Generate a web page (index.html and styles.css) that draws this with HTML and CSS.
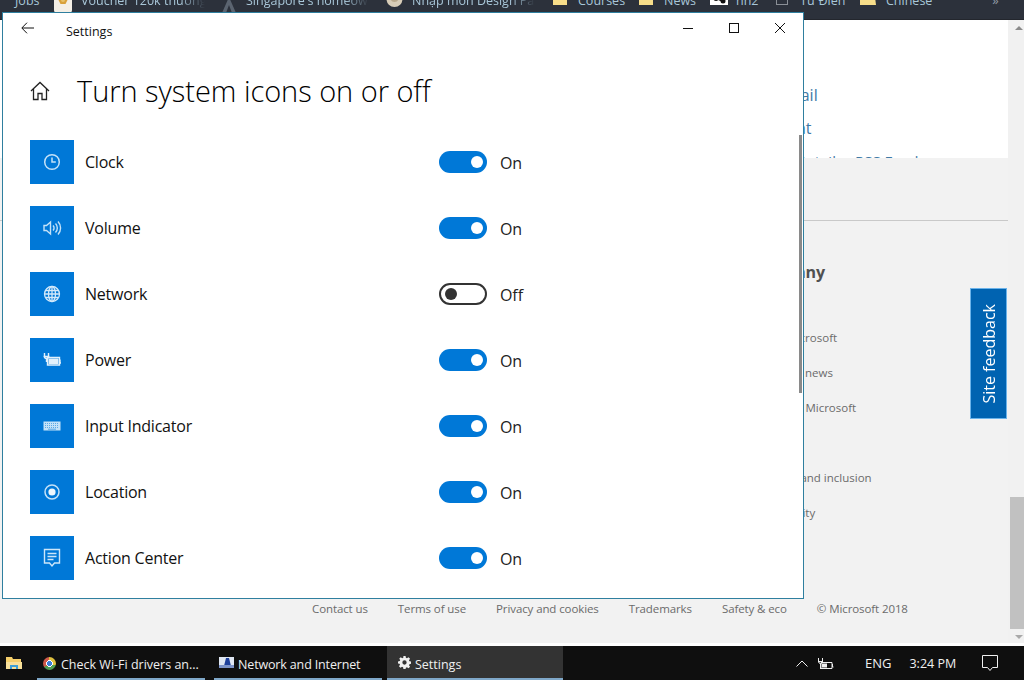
FILE: index.html
```html
<!DOCTYPE html>
<html lang="en">
<head>
<meta charset="utf-8">
<title>Turn system icons on or off</title>
<link rel="stylesheet" href="styles.css">
</head>
<body>
<div class="desktop">
  <div class="browser">
    <div class="bookmarks">
      <div class="bm-row">
        <span class="bm-text bm-jobs">Jobs</span>
        <svg class="bm-icon bm-voucher" width="18" height="16" viewBox="0 0 18 16"><rect width="18" height="16" rx="3" fill="#f4efe6"/><path d="M4 2h10l-2.500 5h-5z" fill="#d9a13a"/><circle cx="9" cy="3" r="2" fill="#e8c26a"/></svg>
        <span class="bm-text bm-fade bm-w-voucher">Voucher 120k thưởng</span>
        <svg class="bm-icon bm-a" width="14" height="16" viewBox="0 0 14 16"><path d="M7 0L14 16H10L7 8L4 16H0z" fill="#5b6470"/></svg>
        <span class="bm-text bm-fade bm-w-sing">Singapore's homeowner</span>
        <svg class="bm-icon bm-round" width="17" height="16" viewBox="0 0 17 16"><circle cx="8.500" cy="2" r="8" fill="#d8cdb8"/><circle cx="8.500" cy="1" r="4" fill="#b9a98c"/></svg>
        <span class="bm-text bm-fade bm-w-nhap">Nhập môn Design Pattern</span>
        <svg class="bm-icon bm-folder1" width="14" height="16" viewBox="0 0 14 16"><path d="M0 0h14v8H0z" fill="#f7dd8a"/></svg>
        <span class="bm-text bm-courses">Courses</span>
        <svg class="bm-icon bm-folder2" width="14" height="16" viewBox="0 0 14 16"><path d="M0 0h14v8H0z" fill="#f7dd8a"/></svg>
        <span class="bm-text bm-news">News</span>
        <svg class="bm-icon bm-hh" width="18" height="16" viewBox="0 0 18 16"><rect width="18" height="8" fill="#fff"/><circle cx="6" cy="1.500" r="2.500" fill="#111"/><circle cx="13" cy="4" r="2.500" fill="#111"/><path d="M6 1l7 3" stroke="#111" stroke-width="2"/></svg>
        <span class="bm-text bm-hh2">hh2</span>
        <svg class="bm-icon bm-doc" width="12" height="16" viewBox="0 0 12 16"><rect x=".5" y="-4" width="11" height="11.500" fill="none" stroke="#8a8f96"/></svg>
        <span class="bm-text bm-tu">Từ Điển</span>
        <svg class="bm-icon bm-folder3" width="16" height="16" viewBox="0 0 16 16"><path d="M0 0h15l1 8H0z" fill="#f7dd8a"/></svg>
        <span class="bm-text">Chinese</span>
        <span class="bm-more">»</span>
      </div>
    </div>
    <div class="content">
      <main class="page">
        <section class="panel">
          <a class="panel-link">Email</a>
          <a class="panel-link panel-link-short">Chat</a>
          <a class="panel-link panel-link-rss">Retailor RSS Feed</a>
        </section>
        <section class="footer">
          <hr class="rule">
          <h2 class="col-title">Company</h2>
          <ul class="col-list">
            <li>About Microsoft</li>
            <li>Company news</li>
            <li>Privacy at Microsoft</li>
            <li>Investors</li>
            <li>Diversity and inclusion</li>
            <li>Accessibility</li>
          </ul>
          <nav class="legal">
            <span>Contact us</span>
            <span>Terms of use</span>
            <span>Privacy and cookies</span>
            <span>Trademarks</span>
            <span>Safety &amp; eco</span>
            <span>© Microsoft 2018</span>
          </nav>
        </section>
      </main>
      <div class="page-scroll">
        <span class="arrow-up"></span>
        <span class="thumb"></span>
        <span class="arrow-down"></span>
      </div>
    </div>
  </div>

  <div class="taskbar">
    <div class="task-start">
      <svg width="16" height="14" viewBox="0 0 16 14"><path d="M0 1h6l1 2h8v10H0z" fill="#f5cf6b"/><rect x="0" y="6" width="16" height="7" fill="#f8e09a"/><path d="M4 13V9h8v4h-2v-2H6v2z" fill="#3d9fd6"/></svg>
    </div>
    <div class="task task-chrome">
      <span class="chrome-logo"></span>
      <span class="task-label">Check Wi-Fi drivers an...</span>
    </div>
    <div class="task task-net">
      <svg width="15" height="11" viewBox="0 0 15 11"><rect width="15" height="11" fill="#dfe6f2"/><path d="M5 9L7 1h3l2 8z" fill="#1d3f9a"/><rect y="8" width="15" height="3" fill="#7c93c9"/></svg>
      <span class="task-label">Network and Internet</span>
    </div>
    <div class="task task-settings">
      <svg width="13" height="13" viewBox="0 0 24 24"><path fill="#f0f0f0" fill-rule="evenodd" d="M10 0h4l.6 3.300 2 .8L19.400 2.200l2.800 2.800-1.900 2.800.8 2 3.300.6v4l-3.300.6-.8 2 1.900 2.800-2.800 2.800-2.800-1.900-2 .8L14 24h-4l-.6-3.300-2-.8-2.800 1.900-2.800-2.800 1.900-2.800-.8-2L0 14v-4l3.300-.6.8-2L2.200 5l2.800-2.800 2.800 1.900 2-.8zM12 8a4 4 0 1 0 0 8 4 4 0 0 0 0-8z"/></svg>
      <span class="task-label">Settings</span>
    </div>
    <div class="tray">
      <svg class="tray-chevron" width="12" height="7" viewBox="0 0 12 7"><path d="M.5 6.500L6 1l5.500 5.500" fill="none" stroke="#eee"/></svg>
      <svg class="tray-battery" width="17" height="13" viewBox="0 0 17 13"><path d="M4 5.500h11v6H4zM15.500 7v3h1" fill="none" stroke="#eee"/><rect x="5" y="6.500" width="5" height="4" fill="#eee"/><path d="M1 4.500h5M1.500 1v3.500a2 2 0 0 0 4 0V1M3.500 6.500V12" fill="none" stroke="#eee"/></svg>
      <span class="tray-lang">ENG</span>
      <span class="tray-time">3:24 PM</span>
      <svg class="tray-note" width="16" height="17" viewBox="0 0 16 17"><path d="M.5.500h15v12h-5l-2.500 3-2.500-3h-5z" fill="none" stroke="#f0f0f0"/></svg>
    </div>
  </div>

  <button class="feedback"><span>Site feedback</span></button>

  <div class="window">
    <header class="titlebar">
      <svg class="back" width="13" height="12" viewBox="0 0 13 12"><path d="M13 6H1M6 .7L.8 6 6 11.300" fill="none" stroke="#111"/></svg>
      <span class="app-name">Settings</span>
      <div class="controls">
        <svg width="10" height="10" viewBox="0 0 10 10"><path d="M0 5.500h10" stroke="#111"/></svg>
        <svg width="10" height="10" viewBox="0 0 10 10"><rect x=".5" y=".5" width="9" height="9" fill="none" stroke="#111"/></svg>
        <svg width="10" height="10" viewBox="0 0 10 10"><path d="M0 0l10 10M10 0L0 10" stroke="#111"/></svg>
      </div>
    </header>
    <div class="heading">
      <svg class="home" width="20" height="20" viewBox="0 0 20 20"><path d="M1 10L10 1.500 19 10M3.500 8v10.500h4.500v-6h4v6h4.500V8" fill="none" stroke="#222" stroke-width="1.300"/></svg>
      <h1>Turn system icons on or off</h1>
    </div>
    <div class="rows">
      <div class="row">
        <span class="tile"><svg width="20" height="20" viewBox="0 0 20 20"><g fill="none" stroke="#c4e2f8" stroke-width="1.500"><circle cx="10" cy="10" r="7.300"/><path d="M10 5.500V10h3.800"/></g></svg></span>
        <span class="label">Clock</span>
        <span class="toggle on"><i></i></span><span class="state">On</span>
      </div>
      <div class="row">
        <span class="tile"><svg width="20" height="20" viewBox="0 0 20 20"><g fill="none" stroke="#c4e2f8" stroke-width="1.400"><path d="M2 7.500h2.500L8.500 4v12l-4-3.500H2z"/><path d="M11 7.500a3.500 3.500 0 0 1 0 5M13.500 5.500a6.500 6.500 0 0 1 0 9M16 3.500a9.500 9.500 0 0 1 0 13"/></g></svg></span>
        <span class="label">Volume</span>
        <span class="toggle on"><i></i></span><span class="state">On</span>
      </div>
      <div class="row">
        <span class="tile"><svg width="20" height="20" viewBox="0 0 20 20"><g fill="none" stroke="#d3e9fa" stroke-width="1.300"><circle cx="10" cy="10" r="7.500"/><ellipse cx="10" cy="10" rx="3.500" ry="7.500"/><path d="M10 2.500v15M2.500 10h15M3.500 6.500h13M3.500 13.500h13"/></g></svg></span>
        <span class="label">Network</span>
        <span class="toggle off"><i></i></span><span class="state">Off</span>
      </div>
      <div class="row">
        <span class="tile"><svg width="20" height="20" viewBox="0 0 20 20"><g fill="none" stroke="#e2f1fc" stroke-width="1.400"><path d="M5.500 7.500h12v7.500h-12zM18 9.500v3.500h1"/><path d="M1.500 6.500h6M2.500 3v3.500a2 2 0 0 0 4 0V3M4.500 8.500V12"/></g><rect x="6.500" y="8.500" width="10" height="5.500" fill="#e2f1fc"/></svg></span>
        <span class="label">Power</span>
        <span class="toggle on"><i></i></span><span class="state">On</span>
      </div>
      <div class="row">
        <span class="tile"><svg width="20" height="20" viewBox="0 0 20 20"><rect x="1.500" y="5.500" width="17" height="9" fill="#c4e2f8"/><path d="M3 7.500h14M3 9.500h14M3 11.500h14" stroke="#5ba9e6" stroke-dasharray="1 1"/><path d="M6 13.200h8" stroke="#5ba9e6"/></svg></span>
        <span class="label">Input Indicator</span>
        <span class="toggle on"><i></i></span><span class="state">On</span>
      </div>
      <div class="row">
        <span class="tile"><svg width="20" height="20" viewBox="0 0 20 20"><circle cx="10" cy="10" r="7" fill="none" stroke="#c4e2f8" stroke-width="1.500"/><circle cx="10" cy="10" r="3.600" fill="#eef7fd"/></svg></span>
        <span class="label">Location</span>
        <span class="toggle on"><i></i></span><span class="state">On</span>
      </div>
      <div class="row">
        <span class="tile"><svg width="20" height="20" viewBox="0 0 20 20"><g fill="none" stroke="#cde6f9" stroke-width="1.400"><path d="M2.500 1.500h15v13.500h-5l-2.500 3-2.500-3h-5z"/><path d="M5.500 5.500h9M5.500 8.500h9M5.500 11.500h6"/></g></svg></span>
        <span class="label">Action Center</span>
        <span class="toggle on"><i></i></span><span class="state">On</span>
      </div>
    </div>
    <span class="win-scroll"></span>
  </div>
</div>
</body>
</html>
```
FILE: styles.css
```css
* { box-sizing: border-box; }
html, body { margin: 0; padding: 0; }
body {
  width: 1024px;
  height: 680px;
  overflow: hidden;
  background: #fff;
  font-family: "Open Sans", "Noto Sans", "Liberation Sans", sans-serif;
}
.desktop {
  position: relative;
  width: 1024px;
  height: 680px;
  display: flex;
  flex-direction: column;
  overflow: hidden;
}

/* browser behind */
.browser { height: 646px; display: flex; flex-direction: column; padding-bottom: 3px; }
.bookmarks {
  height: 20px;
  flex: none;
  background: #2c313b;
  border-bottom: 1px solid #23262d;
  overflow: hidden;
}
.bm-row {
  display: flex;
  align-items: center;
  height: 20px;
  margin-top: -10px;
  padding-left: 15px;
  white-space: nowrap;
}
.bm-text { font-size: 12.500px; color: #a8c6d8; flex: none; }
.bm-fade {
  overflow: hidden;
  -webkit-mask-image: linear-gradient(to right, #000 80%, transparent);
  mask-image: linear-gradient(to right, #000 80%, transparent);
}
.bm-icon { flex: none; margin-top: 10px; }
.bm-jobs { width: 39px; }
.bm-voucher { margin-right: 9px; }
.bm-w-voucher { width: 124px; margin-right: 17px; }
.bm-a { margin-right: 10px; }
.bm-w-sing { width: 123px; margin-right: 17px; }
.bm-round { margin-right: 9px; }
.bm-w-nhap { width: 123px; margin-right: 18px; }
.bm-folder1 { margin-right: 11px; }
.bm-courses { width: 46px; margin-right: 15px; }
.bm-folder2 { margin-right: 11px; }
.bm-news { width: 32px; margin-right: 14px; }
.bm-hh { margin-right: 8px; }
.bm-hh2 { width: 23px; margin-right: 17px; }
.bm-doc { margin-right: 12px; }
.bm-tu { width: 45px; margin-right: 15px; }
.bm-folder3 { margin-right: 10px; }
.bm-more { margin-left: 60px; font-size: 13px; color: #8f98a3; }

.content { flex: 1; display: flex; min-height: 0; }
.page { flex: 1; display: flex; flex-direction: column; min-width: 0; background: #f2f2f2; }
.panel {
  height: 138px;
  flex: none;
  background: #fff;
  overflow: hidden;
  padding: 64px 0 0 777px;
  display: flex;
  flex-direction: column;
  gap: 10px;
}
.panel-link { font-size: 16px; line-height: 23px; color: #3f7aa6; white-space: nowrap; }
.panel-link-rss { margin-left: 20px; font-size: 15px; }
.footer { flex: 1; display: flex; flex-direction: column; padding-top: 62px; }
.rule { width: 100%; height: 1px; margin: 0; border: 0; background: #c9c9c9; flex: none; }
.col-title {
  margin: 40px 0 0 750px;
  font-size: 16px;
  line-height: 22px;
  font-weight: 700;
  color: #505050;
}
.col-list {
  list-style: none;
  margin: 46px 0 0 751px;
  padding: 0;
  display: flex;
  flex-direction: column;
  gap: 18px;
  font-size: 11.500px;
  line-height: 17px;
  color: #6b6b6b;
}
.legal {
  margin-top: auto;
  padding: 0 0 26px 312px;
  display: flex;
  gap: 30px;
  font-size: 11.500px;
  letter-spacing: -0.1px;
  line-height: 17px;
  color: #6b6b6b;
  white-space: nowrap;
}
.page-scroll {
  width: 16px;
  flex: none;
  background: #f1f1f1;
  display: flex;
  flex-direction: column;
  align-items: flex-end;
}
.arrow-up, .arrow-down { width: 0; height: 0; border-left: 4px solid transparent; border-right: 4px solid transparent; margin-right: 1px; }
.arrow-up { border-bottom: 4px solid #8a8a8a; margin-top: 6px; }
.arrow-down { border-top: 4px solid #a9a9a9; margin-top: 6px; }
.thumb { width: 14px; height: 132px; margin-top: 467px; background: #c1c1c1; }

/* taskbar */
.taskbar {
  height: 34px;
  flex: none;
  background: #0f0f0f;
  display: flex;
  align-items: stretch;
  color: #f0f0f0;
}
.task-start { width: 37px; display: flex; align-items: center; padding: 0 0 0 6px; }
.task {
  display: flex;
  align-items: center;
  font-size: 12.500px;
  border-bottom: 2px solid #7fa8c9;
  white-space: nowrap;
}
.task-label { line-height: 18px; margin-top: 6px; }
.task-chrome { width: 168px; padding-left: 6px; gap: 5px; margin-right: 9px; }
.chrome-logo {
  width: 13px;
  height: 13px;
  margin-top: 2px;
  border-radius: 50%;
  background:
    radial-gradient(circle, #3f7fd6 0 2.500px, #fff 2.600px 3.400px, transparent 3.500px),
    conic-gradient(#e0c13f 0 30%, #4f9b52 30% 65%, #cf5a4a 65% 100%);
}
.task-net { width: 168px; padding-left: 5px; gap: 4px; margin-right: 5px; letter-spacing: -0.15px; }
.task-settings { width: 176px; padding-left: 11px; gap: 4px; background: #333; }
.tray { flex: 1; display: flex; align-items: center; font-size: 13px; }
.tray-chevron { margin-left: 233px; }
.tray-battery { margin-left: 9px; }
.tray-lang { margin-left: 31px; }
.tray-time { margin-left: 18px; font-size: 12.500px; }
.tray-note { margin-left: 26px; }

/* overlays */
.feedback {
  position: absolute;
  left: 970px;
  top: 288px;
  width: 37px;
  height: 131px;
  margin: 0;
  padding: 0 0 0 1px;
  background: #0063b1;
  border: 1px solid #6bb3ea;
  color: #fff;
  font: inherit;
  font-size: 16px;
  display: flex;
  align-items: center;
  justify-content: center;
}
.feedback span { writing-mode: vertical-rl; transform: rotate(180deg); white-space: nowrap; }

.window {
  position: absolute;
  left: 2px;
  top: 12px;
  width: 802px;
  height: 587px;
  background: #fff;
  border: 1px solid #2f7f9f;
  overflow: hidden;
}
.titlebar {
  height: 36px;
  display: flex;
  align-items: center;
  padding: 0 18px 0 18px;
}
.back { flex: none; margin-top: -6px; }
.app-name { margin-left: 32px; font-size: 12.500px; color: #111; margin-top: 1px; }
.controls { margin-left: auto; display: flex; gap: 36px; margin-top: -7px; }
.heading { display: flex; align-items: center; height: 60px; margin-top: 12px; padding-left: 27px; }
.home { flex: none; }
.heading h1 {
  margin: 0 0 0 27px;
  font-size: 29px;
  line-height: 40px;
  font-weight: 300;
  letter-spacing: -0.04px;
  color: #000;
  white-space: nowrap;
}
.rows { padding: 19px 0 0 27px; display: flex; flex-direction: column; gap: 22px; }
.row { display: flex; align-items: center; height: 44px; }
.tile { width: 44px; height: 44px; flex: none; background: #0078d7; display: flex; align-items: center; justify-content: center; }
.label { width: 354px; margin-left: 11px; font-size: 16px; letter-spacing: -0.22px; color: #111; margin-top: -1px; flex: none; }
.toggle {
  width: 48px;
  height: 22px;
  flex: none;
  border-radius: 11px;
  display: flex;
  align-items: center;
  padding: 0 4px;
}
.toggle i { width: 12px; height: 12px; border-radius: 50%; display: block; }
.toggle.on { background: #0078d7; justify-content: flex-end; }
.toggle.on i { background: #fff; }
.toggle.off { background: #fff; border: 2px solid #333; padding: 0 3px 0 4px; }
.toggle.off i { background: #333; }
.state { margin-left: 13px; font-size: 16px; letter-spacing: -0.1px; color: #222; margin-top: 1px; }
.win-scroll {
  position: absolute;
  left: 796px;
  top: 122px;
  width: 3px;
  height: 258px;
  background: #8a8a8a;
}
```
